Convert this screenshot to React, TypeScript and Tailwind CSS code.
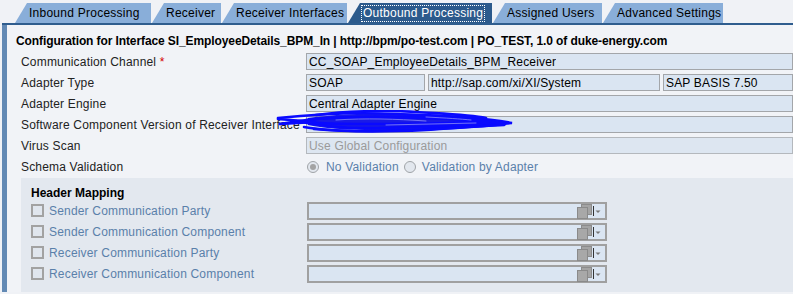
import React from "react";

const tabs = [
  { label: "Inbound Processing", w: "w-[136px]" },
  { label: "Receiver", w: "w-[69px]" },
  { label: "Receiver Interfaces", w: "w-[125px]" },
  { label: "Outbound Processing", w: "w-[144px]" },
  { label: "Assigned Users", w: "w-[109px]" },
  { label: "Advanced Settings", w: "w-[120px]" },
];

function Tab({ label, w, active }: { label: string; w: string; active: boolean }) {
  return (
    <div className={`flex h-[20px] items-stretch tracking-[0.25px] ${w}`}>
      <span
        className={
          active
            ? "h-0 w-0 shrink-0 self-end border-b-[20px] border-l-[12px] border-b-[#2c5a8c] border-l-transparent"
            : "h-0 w-0 shrink-0 self-end border-b-[20px] border-l-[12px] border-b-[#89aed9] border-l-transparent"
        }
      />
      {active ? (
        <div className="flex flex-1 items-center bg-[#2c5a8c] pl-[1px] whitespace-nowrap text-white">
          <span className="border border-dotted border-white px-[1px] leading-[15px]">{label}</span>
        </div>
      ) : (
        <div className="flex flex-1 items-center bg-[#89aed9] pl-[2px] whitespace-nowrap text-black">{label}</div>
      )}
    </div>
  );
}

function Field({ children, disabled }: { children?: React.ReactNode; disabled?: boolean }) {
  return (
    <div
      className={
        disabled
          ? "flex h-[17px] min-w-0 flex-1 items-center border border-[#b4b8bd] bg-[#dde6f1] px-[2px] text-[#9a9a9a]"
          : "flex h-[17px] min-w-0 flex-1 items-center border border-[#a3a6aa] bg-[#dae5f2] px-[2px] text-black"
      }
    >
      <span className="truncate">{children}</span>
    </div>
  );
}

function Row({ label, required, children }: { label: string; required?: boolean; children: React.ReactNode }) {
  return (
    <div className="flex h-[21px] items-center">
      <div className="w-[285px] shrink-0 whitespace-nowrap text-[#222]">
        {label}
        {required && <span className="text-[#d40000]"> *</span>}
      </div>
      <div className="flex flex-1 gap-[3px]">{children}</div>
    </div>
  );
}

function Radio({ checked }: { checked?: boolean }) {
  return (
    <span className="flex h-[12px] w-[12px] items-center justify-center rounded-full border border-[#a0a4a8] bg-[#e2e7ee]">
      {checked && <span className="h-[6px] w-[6px] rounded-full bg-[#a3a3a3]" />}
    </span>
  );
}

function ValueHelpIcon() {
  return (
    <svg width="26" height="16" viewBox="0 0 26 16">
      <rect x="4.5" y="1.5" width="10" height="10" fill="#a4a4a4" stroke="#8c8c8c" />
      <rect x="0.5" y="4.5" width="10" height="11" fill="#a8a8a8" stroke="#8a8a8a" />
      <rect x="16" y="3" width="1" height="10" fill="#333" />
      <path d="M18.5 7.5 L23.5 7.5 L21 10 Z" fill="#777" />
    </svg>
  );
}

const mappings = [
  "Sender Communication Party",
  "Sender Communication Component",
  "Receiver Communication Party",
  "Receiver Communication Component",
];

export default function App() {
  return (
    <div
      className="relative h-[294px] w-[793px] overflow-hidden bg-[#f0f2f6] text-[12px] leading-[14px] tracking-[0.18px]"
      style={{ fontFamily: '"Liberation Sans", Arial, sans-serif' }}
    >
      <div className="flex h-[23px] items-end gap-[1px] pl-[15px]">
        {tabs.map((t) => (
          <Tab key={t.label} label={t.label} w={t.w} active={t.label === "Outbound Processing"} />
        ))}
      </div>
      <div className="ml-[2px] h-[2px] bg-[#2f5d8e]" />

      <div className="flex">
        <div className="ml-[2px] w-[5px] shrink-0 bg-[#6289b4]" />
        <div className="flex-1 bg-[#f1f3f7]">
          <div className="pt-[8px] pl-[9px] font-bold leading-[16px] tracking-[-0.1px] text-black">
            Configuration for Interface SI_EmployeeDetails_BPM_In | http://bpm/po-test.com | PO_TEST, 1.0 of duke-energy.com
          </div>

          <div className="mt-[2px] pl-[14px]">
            <Row label="Communication Channel" required>
              <Field>CC_SOAP_EmployeeDetails_BPM_Receiver</Field>
            </Row>
            <Row label="Adapter Type">
              <div className="flex flex-1 gap-[3px]">
                <div className="flex w-[119px]">
                  <Field>SOAP</Field>
                </div>
                <div className="flex w-[232px]">
                  <Field>http://sap.com/xi/XI/System</Field>
                </div>
                <Field>SAP BASIS 7.50</Field>
              </div>
            </Row>
            <Row label="Adapter Engine">
              <Field>Central Adapter Engine</Field>
            </Row>
            <Row label="Software Component Version of Receiver Interface">
              <Field />
            </Row>
            <Row label="Virus Scan">
              <Field disabled>Use Global Configuration</Field>
            </Row>
            <Row label="Schema Validation">
              <div className="flex items-center text-[#5a80aa]">
                <span className="ml-[1px]">
                  <Radio checked />
                </span>
                <span className="ml-[7px]">No Validation</span>
                <span className="ml-[5px]">
                  <Radio />
                </span>
                <span className="ml-[6px]">Validation by Adapter</span>
              </div>
            </Row>

            <div className="mt-[1px] h-[114px] bg-[#e3e8ef] pt-[8px] pl-[10px]">
              <div className="font-bold leading-[14px] tracking-[0px] text-black">Header Mapping</div>
              <div>
                {mappings.map((m) => (
                  <div key={m} className="flex h-[21px] items-center">
                    <div className="flex w-[276px] shrink-0 items-center">
                      <span className="h-[13px] w-[13px] border-2 border-[#a2a2a2] bg-[#e0e6ee]" />
                      <span className="ml-[5px] text-[#5a80aa]">{m}</span>
                    </div>
                    <div className="flex h-[18px] w-[300px] items-center justify-end border-2 border-[#a0a0a0] bg-[#dae5f2] pr-[2px]">
                      <ValueHelpIcon />
                    </div>
                  </div>
                ))}
              </div>
            </div>
          </div>
        </div>
      </div>

      <svg
        className="pointer-events-none absolute left-[276px] top-[110px]"
        width="245"
        height="26"
        viewBox="0 0 245 26"
      >
        <path
          d="M32 8 C70 3 120 2 160 5 C190 7 215 9 234 14 C205 18 150 20 100 20 C70 20 45 18 32 15 Z"
          fill="#1a1ae6"
        />
        <g fill="none" stroke="#0a0aff" strokeLinecap="round" strokeWidth="2.6">
          <path d="M2 8 C40 4 80 2 120 4 C160 6 200 6 236 13 C200 15 150 17 100 18 C70 19 40 15 20 11" />
          <path d="M30 10 C70 6 110 6 150 8 C180 9 210 10 230 14 C190 18 140 20 90 21 C60 21 40 19 28 17" />
          <path d="M4 14 C30 9 60 7 90 7 C130 7 170 8 215 11 C180 14 130 14 80 14 C55 14 40 13 30 12" />
          <path d="M40 5 C70 1 110 0 140 2 C170 4 195 5 210 8" />
          <path d="M38 19 C70 22 110 22 150 20 C180 18 205 16 228 15" />
          <path d="M2 9 L40 12 L4 14" />
        </g>
        <g fill="none" stroke="#8c8cf5" strokeLinecap="round" strokeWidth="0.8">
          <path d="M60 10 C90 8 120 9 150 11" />
          <path d="M110 15 C140 14 170 14 200 13" />
          <path d="M150 7 C170 8 185 9 195 10" />
        </g>
      </svg>
    </div>
  );
}
